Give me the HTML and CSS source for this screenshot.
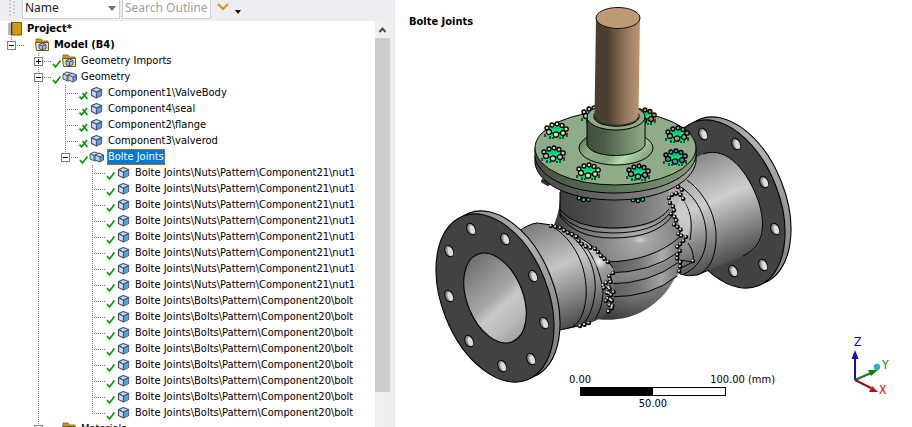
FILE: index.html
```html
<!DOCTYPE html>
<html lang="en">
<head>
<meta charset="utf-8">
<title>Outline and geometry view</title>
<link rel="stylesheet" href="styles.css">
</head>
<body>
<svg class="defs" aria-hidden="true">
  <symbol id="cube" viewBox="0 0 16 16">
    <path d="M2.500 4.500 7.500 2.500l5 2v6L7.500 13l-5-2.500z" fill="#c6dcf6" stroke="#4a545f" stroke-width="1.200" stroke-linejoin="round"/>
    <path d="M8 7.200 12.300 5.200v5l-4.300 2.300z" fill="#5b9bec"/>
    <path d="M2.500 4.600 7.500 7l5-2.400M7.500 7v6" fill="none" stroke="#4a545f" stroke-width="1.200"/>
  </symbol>
  <symbol id="cubes" viewBox="0 0 16 16">
    <path d="M1 5 5 3l5 1.500v5.500L6 12l-5-2z" fill="#c6dcf6" stroke="#4a545f" stroke-linejoin="round"/>
    <path d="M1 5l4 1.500L9 5M5 6.500V11" fill="none" stroke="#4a545f"/>
    <path d="M6 6 10 4l4.500 2v5l-3.500 2-5-2z" fill="#b7d2f4" stroke="#4a545f" stroke-linejoin="round"/>
    <path d="M11 8 14 6.500v4.300L11 12.500z" fill="#5b9bec"/>
    <path d="M6 6l5 2 3.500-2M11 8V13" fill="none" stroke="#4a545f"/>
  </symbol>
  <symbol id="folder" viewBox="0 0 16 16">
    <path d="M1 2h5l1 2h6v4H1z" fill="#c9980f" stroke="#8a6508" stroke-width=".8"/>
    <path d="M0.500 5.500h13v8h-12z" fill="#f5e6a8" stroke="#6b5a26"/>
    <path d="M4 7.500 7.500 6l3.500 1.500v4L7.500 13 4 11.500z" fill="#9fc3ef" stroke="#4a545f"/>
    <path d="M4 7.500 7.500 9l3.500-1.500M7.500 9v4" fill="none" stroke="#4a545f"/>
  </symbol>
  <symbol id="book" viewBox="0 0 16 16">
    <path d="M4 1.500h9.500v12.500H4z" fill="#cf9b10" stroke="#7a5a08"/>
    <path d="M1 2h3v12H1z" fill="#f1f1f1"/>
    <path d="M0 3h3M0 5h3M0 7h3M0 9h3M0 11h3M0 13h3" stroke="#777"/>
    <path d="M3.500 1v13.500" stroke="#4d3b0a"/>
  </symbol>
  <symbol id="check" viewBox="0 0 10 16">
    <path d="M1 11l2.500 3L8.500 7.500" fill="none" stroke="#009a00" stroke-width="1.700"/>
  </symbol>
  <symbol id="check-x" viewBox="0 0 10 16">
    <path d="M0.500 11.500l2 2.500L8 7M3.500 8l5 6" fill="none" stroke="#009a00" stroke-width="1.600"/>
  </symbol>
</svg>

<main class="app">
  <section class="outline" aria-label="Outline">
    <form class="toolbar">
      <svg class="grip" viewBox="0 0 6 16" aria-hidden="true"><path d="M1 0v16M5 1.500v16" stroke="#b4b4bc" stroke-width="1.500" stroke-dasharray="1.500 2"/></svg>
      <span class="picker">
        <select class="field" aria-label="Filter by"><option>Name</option></select>
        <svg class="arrow" viewBox="0 0 8 5" aria-hidden="true"><path d="M0 0h8L4 5z" fill="#717171"/></svg>
      </span>
      <input class="field search" type="text" placeholder="Search Outline" aria-label="Search Outline">
      <button class="tool" type="button" aria-label="Expand"><svg viewBox="0 0 12 8" width="12" height="8"><path d="M1 1l5 5 5-5" fill="none" stroke="#cf9a12" stroke-width="2"/></svg></button>
      <button class="tool more" type="button" aria-label="More"><svg viewBox="0 0 6 4" width="6" height="4"><path d="M0 0h6L3 4z" fill="#111"/></svg></button>
    </form>
    <div class="pane">
      <div class="tree">
        <div class="row root"><svg class="icon"><use href="#book"/></svg><span class="label strong">Project*</span></div>
        <ul class="top">
          <li><div class="row"><span class="twist"><button class="box minus" aria-label="Collapse Model"></button></span><svg class="mark"></svg><svg class="icon"><use href="#folder"/></svg><span class="label strong">Model (B4)</span></div>
            <ul>
              <li><div class="row"><span class="twist"><button class="box plus" aria-label="Expand Geometry Imports"></button></span><svg class="mark"><use href="#check"/></svg><svg class="icon"><use href="#folder"/></svg><span class="label">Geometry Imports</span></div></li>
              <li><div class="row"><span class="twist"><button class="box minus" aria-label="Collapse Geometry"></button></span><svg class="mark"><use href="#check"/></svg><svg class="icon"><use href="#cubes"/></svg><span class="label">Geometry</span></div>
                <ul>
                  <li><div class="row"><span class="twist"></span><svg class="mark"><use href="#check-x"/></svg><svg class="icon"><use href="#cube"/></svg><span class="label">Component1\ValveBody</span></div></li>
                  <li><div class="row"><span class="twist"></span><svg class="mark"><use href="#check-x"/></svg><svg class="icon"><use href="#cube"/></svg><span class="label">Component4\seal</span></div></li>
                  <li><div class="row"><span class="twist"></span><svg class="mark"><use href="#check-x"/></svg><svg class="icon"><use href="#cube"/></svg><span class="label">Component2\flange</span></div></li>
                  <li><div class="row"><span class="twist"></span><svg class="mark"><use href="#check-x"/></svg><svg class="icon"><use href="#cube"/></svg><span class="label">Component3\valverod</span></div></li>
                  <li><div class="row"><span class="twist"><button class="box minus" aria-label="Collapse Bolte Joints"></button></span><svg class="mark"><use href="#check"/></svg><svg class="icon"><use href="#cubes"/></svg><span class="label selected">Bolte Joints</span></div>
                    <ul>
                      <li><div class="row"><span class="twist"></span><svg class="mark"><use href="#check"/></svg><svg class="icon"><use href="#cube"/></svg><span class="label">Bolte Joints\Nuts\Pattern\Component21\nut1</span></div></li>
                      <li><div class="row"><span class="twist"></span><svg class="mark"><use href="#check"/></svg><svg class="icon"><use href="#cube"/></svg><span class="label">Bolte Joints\Nuts\Pattern\Component21\nut1</span></div></li>
                      <li><div class="row"><span class="twist"></span><svg class="mark"><use href="#check"/></svg><svg class="icon"><use href="#cube"/></svg><span class="label">Bolte Joints\Nuts\Pattern\Component21\nut1</span></div></li>
                      <li><div class="row"><span class="twist"></span><svg class="mark"><use href="#check"/></svg><svg class="icon"><use href="#cube"/></svg><span class="label">Bolte Joints\Nuts\Pattern\Component21\nut1</span></div></li>
                      <li><div class="row"><span class="twist"></span><svg class="mark"><use href="#check"/></svg><svg class="icon"><use href="#cube"/></svg><span class="label">Bolte Joints\Nuts\Pattern\Component21\nut1</span></div></li>
                      <li><div class="row"><span class="twist"></span><svg class="mark"><use href="#check"/></svg><svg class="icon"><use href="#cube"/></svg><span class="label">Bolte Joints\Nuts\Pattern\Component21\nut1</span></div></li>
                      <li><div class="row"><span class="twist"></span><svg class="mark"><use href="#check"/></svg><svg class="icon"><use href="#cube"/></svg><span class="label">Bolte Joints\Nuts\Pattern\Component21\nut1</span></div></li>
                      <li><div class="row"><span class="twist"></span><svg class="mark"><use href="#check"/></svg><svg class="icon"><use href="#cube"/></svg><span class="label">Bolte Joints\Nuts\Pattern\Component21\nut1</span></div></li>
                      <li><div class="row"><span class="twist"></span><svg class="mark"><use href="#check"/></svg><svg class="icon"><use href="#cube"/></svg><span class="label">Bolte Joints\Bolts\Pattern\Component20\bolt</span></div></li>
                      <li><div class="row"><span class="twist"></span><svg class="mark"><use href="#check"/></svg><svg class="icon"><use href="#cube"/></svg><span class="label">Bolte Joints\Bolts\Pattern\Component20\bolt</span></div></li>
                      <li><div class="row"><span class="twist"></span><svg class="mark"><use href="#check"/></svg><svg class="icon"><use href="#cube"/></svg><span class="label">Bolte Joints\Bolts\Pattern\Component20\bolt</span></div></li>
                      <li><div class="row"><span class="twist"></span><svg class="mark"><use href="#check"/></svg><svg class="icon"><use href="#cube"/></svg><span class="label">Bolte Joints\Bolts\Pattern\Component20\bolt</span></div></li>
                      <li><div class="row"><span class="twist"></span><svg class="mark"><use href="#check"/></svg><svg class="icon"><use href="#cube"/></svg><span class="label">Bolte Joints\Bolts\Pattern\Component20\bolt</span></div></li>
                      <li><div class="row"><span class="twist"></span><svg class="mark"><use href="#check"/></svg><svg class="icon"><use href="#cube"/></svg><span class="label">Bolte Joints\Bolts\Pattern\Component20\bolt</span></div></li>
                      <li><div class="row"><span class="twist"></span><svg class="mark"><use href="#check"/></svg><svg class="icon"><use href="#cube"/></svg><span class="label">Bolte Joints\Bolts\Pattern\Component20\bolt</span></div></li>
                      <li><div class="row"><span class="twist"></span><svg class="mark"><use href="#check"/></svg><svg class="icon"><use href="#cube"/></svg><span class="label">Bolte Joints\Bolts\Pattern\Component20\bolt</span></div></li>
                    </ul>
                  </li>
                </ul>
              </li>
              <li><div class="row"><span class="twist"><button class="box plus" aria-label="Expand Materials"></button></span><svg class="mark"></svg><svg class="icon"><use href="#folder"/></svg><span class="label">Materials</span></div></li>
            </ul>
          </li>
        </ul>
      </div>
      <div class="scrollbar" aria-hidden="true">
        <svg class="up" viewBox="0 0 15 17"><path d="M4.500 11 7.500 7.500 10.500 11" fill="none" stroke="#505050" stroke-width="2"/></svg>
        <div class="thumb"></div>
        <div class="rest"></div>
      </div>
    </div>
  </section>

  <section class="view" aria-label="Geometry">
    <svg class="model" viewBox="395 0 517 427" role="img" aria-label="Valve assembly">
      <defs>
        <linearGradient id="rod"><stop offset="0" stop-color="#4a3c2e"/><stop offset=".3" stop-color="#4e4031"/><stop offset=".65" stop-color="#8f7258"/><stop offset="1" stop-color="#bd9774"/></linearGradient>
        <linearGradient id="hub"><stop offset="0" stop-color="#41503c"/><stop offset=".3" stop-color="#4c5e47"/><stop offset=".7" stop-color="#748c6d"/><stop offset="1" stop-color="#8fab87"/></linearGradient>
        <linearGradient id="skirt" x1="0" y1=".2" x2="1" y2=".6"><stop offset="0" stop-color="#5c7356"/><stop offset=".25" stop-color="#8fab87"/><stop offset=".55" stop-color="#86a47d"/><stop offset=".72" stop-color="#b8dcab"/><stop offset=".85" stop-color="#9dbf93"/><stop offset="1" stop-color="#86a27e"/></linearGradient>
        <linearGradient id="edge"><stop offset="0" stop-color="#43543e"/><stop offset=".5" stop-color="#5c7356"/><stop offset="1" stop-color="#83a07b"/></linearGradient>
        <linearGradient id="seal"><stop offset="0" stop-color="#464646"/><stop offset=".5" stop-color="#6b6b6b"/><stop offset="1" stop-color="#a3a3a3"/></linearGradient>
        <linearGradient id="neck"><stop offset="0" stop-color="#3e3e3e"/><stop offset=".35" stop-color="#505050"/><stop offset="1" stop-color="#949494"/></linearGradient>
        <linearGradient id="rim" gradientUnits="userSpaceOnUse" x1="480" y1="212" x2="545" y2="372"><stop offset="0" stop-color="#8c8c8c"/><stop offset=".35" stop-color="#b2b2b2"/><stop offset="1" stop-color="#7c7c7c"/></linearGradient>
        <linearGradient id="rim2" gradientUnits="userSpaceOnUse" x1="711" y1="117" x2="776" y2="277"><stop offset="0" stop-color="#8c8c8c"/><stop offset=".35" stop-color="#b2b2b2"/><stop offset="1" stop-color="#858585"/></linearGradient>
        <linearGradient id="bore" gradientUnits="userSpaceOnUse" x1="478" y1="255" x2="510" y2="341"><stop offset="0" stop-color="#6d6d6d"/><stop offset=".5" stop-color="#a8a8a8"/><stop offset=".62" stop-color="#c8c8c8"/><stop offset=".8" stop-color="#bcbcbc"/><stop offset="1" stop-color="#a0a0a0"/></linearGradient>
        <linearGradient id="pipeL" gradientUnits="userSpaceOnUse" x1="540" y1="222" x2="583" y2="326"><stop offset="0" stop-color="#7d7d7d"/><stop offset=".3" stop-color="#b0b0b0"/><stop offset=".42" stop-color="#c6c6c6"/><stop offset=".7" stop-color="#8a8a8a"/><stop offset="1" stop-color="#444"/></linearGradient>
        <linearGradient id="pipeR" gradientUnits="userSpaceOnUse" x1="693" y1="158" x2="737" y2="262"><stop offset="0" stop-color="#868686"/><stop offset=".25" stop-color="#b4b4b4"/><stop offset=".42" stop-color="#cfcfcf"/><stop offset=".7" stop-color="#8c8c8c"/><stop offset="1" stop-color="#484848"/></linearGradient>
        <radialGradient id="body" gradientUnits="userSpaceOnUse" cx="640" cy="238" r="85"><stop offset="0" stop-color="#b0b0b0"/><stop offset=".35" stop-color="#8e8e8e"/><stop offset=".7" stop-color="#707070"/><stop offset="1" stop-color="#3c3c3c"/></radialGradient>
        <linearGradient id="band"><stop offset="0" stop-color="#555"/><stop offset=".45" stop-color="#777"/><stop offset=".75" stop-color="#ababab"/><stop offset="1" stop-color="#777"/></linearGradient>
        <radialGradient id="glint"><stop offset="0" stop-color="#fff"/><stop offset="1" stop-color="#fff" stop-opacity="0"/></radialGradient>
        <g id="hole"><ellipse rx="4" ry="6" transform="rotate(-20)" fill="#8e8e8e" stroke="#000"/><ellipse cx="1" cy="1" rx="2.500" ry="4.500" transform="rotate(-20)" fill="#dcdcdc"/></g>
        <g id="nut">
          <path d="M-9-4-4-7H4L9-4 10 3 7 8 0 7-6 8-10 4z" fill="#00ea84"/>
          <ellipse cy="-3" rx="4" ry="1.500" fill="#00c877"/>
          <path d="M-11 3v3M-6 5v3M-3 6v2M4 6v2M7 5v3M11 2v4M-4 1v2M4 1v2" fill="none" stroke="#000" stroke-width="1.200"/>
          <g fill="currentColor" stroke="#000" stroke-width="1.300"><circle cx="-4" cy="-6" r="2"/><circle cx="1" cy="-7" r="2"/><circle cx="6" cy="-5.500" r="2"/><circle cx="-9" cy="-3" r="2"/><circle cx="10" cy="-2" r="2.200"/><circle cx="-7" cy="1" r="2.500"/><circle cx="0" cy="3.500" r="2.700"/><circle cx="7" cy="2" r="2.500"/></g>
        </g>
        <path id="seam" d="M551 226 561 228 566 232 576 236 580 243 587 247 596 249 600 255 608 262 606 258M613 273 608 277 612 282 604 283 602 288 611 287 606 294 614 292 605 301 613 299 609 306 614 306 608 312M580 326 587 324 591 322M669 198 674 193 680 194 684 200M678 187 685 192M670 203 675 209 671 214 677 219 674 225 681 229 678 235 686 237 682 243 677 246 680 251 676 257 681 263 679 273M693 261h1"/>
      </defs>

      <!-- right flange and pipe -->
      <g stroke="#000" stroke-width="1.100">
        <ellipse cx="732" cy="201" rx="53" ry="88" transform="rotate(-21.600 732 201)" fill="url(#rim2)"/>
        <ellipse cx="726" cy="204" rx="53" ry="88" transform="rotate(-21.600 726 204)" fill="#424242"/>
      </g>
      <use href="#hole" x="703" y="134"/><use href="#hole" x="736" y="144"/><use href="#hole" x="764" y="182"/><use href="#hole" x="775" y="229"/><use href="#hole" x="763" y="265"/><use href="#hole" x="733" y="271"/>
      <path d="M660 176 703 154C728 145 748 173 758 200 766 224 765 246 749 254L709 270 697 275Q688 277 680 274L650 262z" fill="url(#pipeR)"/>
      <path d="M703 154C728 145 748 173 758 200 766 224 765 246 743 256M709 270 697 275Q688 277 680 274" fill="none" stroke="#000"/>
      <path d="M687 180C706 194 722 222 714 254 711 266 704 273 697 275M679 186C700 198 710 225 705 248 701 264 692 270 684 274M676 192C688 204 694 216 690 240" fill="none" stroke="#000"/>
      <path d="M680 196C693 210 692 232 685 242L675 225z" fill="#ccc" opacity=".8"/>
      <path d="M688 243C693 250 694 257 693 262L681 268M680 260 693 262" fill="none" stroke="#000"/>

      <!-- valve body -->
      <path d="M560 200C558 220 553 224 551 236L556 290C575 322 604 323 629 317 655 309 674 288 680 264 684 240 682 225 670 205z" fill="url(#body)"/>
      <path d="M605 262Q650 262 680 236L681 253Q654 272 608 273z" fill="url(#band)"/>
      <path d="M608 284Q650 284 679 262L678 276Q652 296 610 297z" fill="url(#band)" opacity=".8"/>
      <path d="M604 262Q652 262 681 236M606 273Q652 273 680 251M608 284Q650 284 679 262M610 297Q652 297 677 276" fill="none" stroke="#000"/>
      <ellipse cx="640" cy="240" rx="8" ry="4" fill="url(#glint)" opacity=".4"/>
      <path d="M560 190H669V210Q655 230 612 229 575 227 560 210z" fill="url(#neck)"/>
      <path d="M560 210Q576 228 612 228 655 228 669 209M560 214Q576 233 612 233 655 233 670 213M560 216Q576 238 612 238 656 238 672 216M560 192V216" fill="none" stroke="#000"/>

      <!-- left pipe -->
      <path d="M516 236Q526 224 537 223L552 225C575 232 600 248 613 268L614 306C603 319 592 325 556 331z" fill="url(#pipeL)"/>
      <path d="M518 232Q528 224 537 223L552 225C575 232 600 248 613 268" fill="none" stroke="#000"/>
      <path d="M552 226C574 240 588 266 586 298 584 314 580 322 573 326M566 232C584 244 597 266 595 292 593 310 588 320 581 325M586 247C594 258 600 272 603 290 603 302 600 312 595 319M560 330 590 323" fill="none" stroke="#000"/>
      <ellipse cx="599" cy="262" rx="8" ry="6" transform="rotate(50 599 262)" fill="url(#glint)" opacity=".8"/>

      <!-- left flange -->
      <g stroke="#000" stroke-width="1.100">
        <ellipse cx="501" cy="295" rx="53" ry="88" transform="rotate(-21.600 501 295)" fill="url(#rim)"/>
        <ellipse cx="495" cy="298" rx="53" ry="88" transform="rotate(-21.600 495 298)" fill="#424242"/>
        <ellipse cx="495" cy="298" rx="28" ry="47" transform="rotate(-21.600 495 298)" fill="url(#bore)"/>
      </g>
      <use href="#hole" x="471" y="229"/><use href="#hole" x="505" y="239"/><use href="#hole" x="533" y="276"/><use href="#hole" x="544" y="323"/><use href="#hole" x="531" y="359"/><use href="#hole" x="502" y="366"/><use href="#hole" x="469" y="341"/><use href="#hole" x="449" y="296"/><use href="#hole" x="449" y="251"/>

      <!-- contact beads along the seams -->
      <g fill="none" stroke-linecap="round">
        <use href="#seam" stroke="#000" stroke-width="4.500" stroke-dasharray="0 4.700"/>
        <use href="#seam" x="-0.500" y="-0.500" stroke="#d8d8d8" stroke-width="2.300" stroke-dasharray="0 4.700"/>
        <path d="M579 198q4 3 12 1M633 200q5 2 11-1" stroke="#000" stroke-width="5" stroke-dasharray="0 5"/>
        <path d="M579 198q4 3 12 1M633 200q5 2 11-1" stroke="#3ee39b" stroke-width="2.500" stroke-dasharray="0 5"/>
        <path d="M543 181l5 3" stroke="#333" stroke-width="4"/>
      </g>

      <!-- cover -->
      <g stroke="#000">
        <path d="M535 156V164C540 187 574 200 615 200 658 200 692 184 696 162V154z" fill="url(#seal)"/>
        <path d="M535 148V158C541 180 574 193 615 193 658 193 692 178 696 156V148z" fill="url(#edge)"/>
        <ellipse cx="615.500" cy="148" rx="80.500" ry="37" fill="#8fab87"/>
      </g>
      <g color="#e8e0a0"><use href="#nut" x="556" y="131"/><use href="#nut" x="588" y="172"/></g>
      <g color="#c8c8dc"><use href="#nut" x="553" y="155"/><use href="#nut" x="593" y="115"/></g>
      <g color="#8fab87"><use href="#nut" x="677" y="135"/></g>
      <g color="#a99aa4"><use href="#nut" x="638" y="173"/></g>
      <g color="#5f86ad"><use href="#nut" x="675" y="158"/></g>
      <g color="#c87c4c"><use href="#nut" x="644" y="117"/></g>
      <g stroke="#000">
        <ellipse cx="616" cy="148" rx="37" ry="17" fill="url(#skirt)"/>
        <path d="M587 118V145C592 159 639 159 645 145V118z" fill="url(#hub)"/>
        <ellipse cx="616" cy="117" rx="29" ry="13" fill="#8fab87"/>
        <path d="M594 114V118C598 129 634 129 639 118V114z" fill="#5c7356"/>
      </g>
      <path d="M596 18 594.500 117C599 128 634 128 638.500 117L640 18z" fill="url(#rod)"/>
      <path d="M594.500 117C599 128 634 128 638.500 117" fill="none" stroke="#222"/>
      <ellipse cx="618" cy="18" rx="22" ry="10.500" fill="#bd9a76" stroke="#111"/>
    </svg>

    <h1 class="title">Bolte Joints</h1>

    <div class="scale">
      <div class="ends"><span>0.00</span><span>100.00 (mm)</span></div>
      <div class="bar"></div>
      <div class="mid">50.00</div>
    </div>

    <svg class="triad" viewBox="848 332 48 66" role="img" aria-label="Axes">
      <path d="M855 380V358" stroke="#1414b4" stroke-width="2"/><path d="M855 350l3.500 9h-7z" fill="#1414b4"/>
      <path d="M855 380l16-7" stroke="#14781e" stroke-width="2"/><path d="M878 370l-7 6-3-6z" fill="#14781e"/>
      <circle cx="877" cy="367" r="3.200" fill="#27b3b3"/>
      <path d="M855 380l16 8" stroke="#8c1414" stroke-width="2"/><path d="M878 392l-9 0 3-6z" fill="#b41414"/>
      <text x="854" y="346" fill="#0000f0">Z</text><text x="882" y="369" fill="#008c00">Y</text><text x="879" y="394" fill="#f00000">X</text>
    </svg>
  </section>
</main>
</body>
</html>
```
FILE: styles.css
```css
* { box-sizing: border-box; }

body {
  margin: 0;
  background: #fff;
  color: #000;
  font: 11px/16px "DejaVu Sans Condensed", "Noto Sans", sans-serif;
}

.defs { display: none; }

.app {
  display: grid;
  grid-template-columns: 395px 1fr;
  height: 100vh;
  overflow: hidden;
}

.outline {
  display: flex;
  flex-direction: column;
  min-height: 0;
  padding-right: 5px;
  background: #eeeef2;
}

.toolbar {
  display: flex;
  flex: none;
  gap: 2px;
  height: 21px;
  padding: 0 0 2px 9px;
}

.grip { width: 6px; height: 16px; margin-right: 5px; }

.picker { display: grid; width: 98px; }

.picker > * { grid-area: 1 / 1; }

.arrow { width: 8px; height: 5px; margin: 6px 4px; justify-self: end; pointer-events: none; }

.field {
  appearance: none;
  min-width: 0;
  padding: 0 2px 2px;
  border: 1px solid #cccedb;
  border-top: 0;
  border-radius: 0;
  background: #fff;
  color: #1e1e1e;
  font: 12px/16px "Noto Sans", "Liberation Sans", sans-serif;
}

.search { width: 89px; }
.search::placeholder { color: #a0a0a0; opacity: 1; }

.tool {
  display: flex;
  padding: 3px 4px;
  border: 0;
  background: none;
}

.more { padding: 10px 0; }

.pane {
  display: flex;
  flex: 1;
  min-height: 0;
  background: #fff;
}

.tree { flex: 1; overflow: hidden; }

ul { margin: 0; padding: 0 0 0 27px; list-style: none; }
.top { padding-left: 6px; }

/* Vertical guide of each branch; it stops at the last child's elbow. */
li {
  background: repeating-linear-gradient(#808080 0 1px, transparent 1px 2px) 5px 0 / 1px 100% no-repeat;
}
li:last-child { background-size: 1px 8px; }

.row { display: flex; height: 16px; white-space: nowrap; }
.root { padding-left: 8px; }

.twist {
  flex: none;
  width: 19px;
  padding: 4px 0 0 1px;
  background: repeating-linear-gradient(90deg, #808080 0 1px, transparent 1px 2px) 5px 8px / 14px 1px no-repeat;
}

.box {
  display: block;
  width: 9px;
  height: 9px;
  padding: 0;
  border: 1px solid #808080;
  border-radius: 0;
  background: linear-gradient(#000, #000) center / 5px 1px no-repeat, #fff;
}

.plus {
  background: linear-gradient(#000, #000) center / 5px 1px no-repeat, linear-gradient(#000, #000) center / 1px 5px no-repeat, #fff;
}

.mark { flex: none; width: 10px; height: 16px; }
.icon { flex: none; width: 16px; height: 16px; margin-right: 2px; }

.label { padding: 0 1px; }
.strong { font-weight: bold; }
.selected { background: #0078d7; color: #fff; outline: 1px dotted #d47a20; outline-offset: -1px; }

.scrollbar {
  display: flex;
  flex-direction: column;
  width: 15px;
  background: #f0f0f0;
}
.up { width: 15px; height: 17px; }
.thumb { flex: 354; background: #cdcdcd; }
.rest { flex: 35; }

.view { position: relative; min-width: 0; overflow: hidden; }

.model { display: block; width: 100%; height: 100%; }

.title {
  position: absolute;
  top: 14px;
  left: 14px;
  margin: 0;
  font-size: 11px;
  line-height: 16px;
}

.scale {
  position: absolute;
  bottom: 16px;
  left: 174px;
  width: 206px;
  line-height: 15px;
}
.ends { display: flex; justify-content: space-between; }
.bar {
  width: 146px;
  height: 9px;
  margin: 0 11px;
  border: 1px solid #000;
  background: linear-gradient(90deg, #000 50%, #fff 50%);
}
.mid { width: 146px; margin: 0 11px; text-align: center; }

.triad {
  position: absolute;
  right: 16px;
  bottom: 29px;
  width: 48px;
  height: 66px;
  font-size: 12px;
}
```
